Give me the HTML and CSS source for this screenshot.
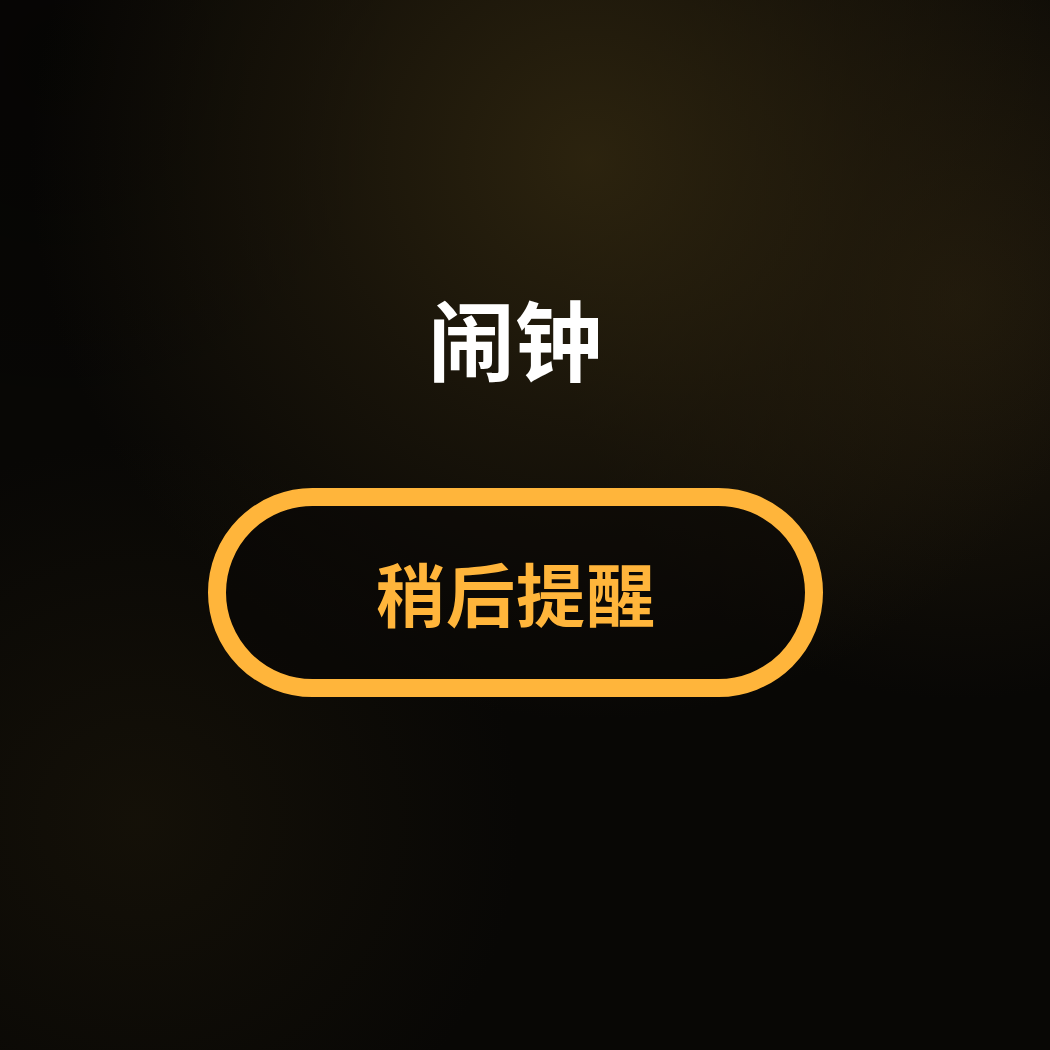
FILE: index.html
```html
<!DOCTYPE html>
<html lang="zh-CN">
<head>
    <meta charset="UTF-8">
    <meta name="viewport" content="width=device-width, initial-scale=1.0">
    <title>闹钟</title>
    <link rel="stylesheet" href="styles.css">
</head>
<body>
    <div class="alarm">
        <h1 class="alarm-title">闹钟</h1>
        <button class="snooze-btn">稍后提醒</button>
    </div>
</body>
</html>
```

FILE: styles.css
```css
html, body {
    margin: 0;
    height: 100%;
}

body {
    background-color: #080705;
    background-image:
        radial-gradient(circle at 590px 160px, rgba(50, 40, 16, 0.85) 0px, rgba(38, 30, 13, 0.55) 280px, rgba(20, 16, 8, 0) 560px),
        radial-gradient(circle at 960px 300px, rgba(44, 34, 15, 0.65) 0px, rgba(30, 22, 10, 0) 400px),
        radial-gradient(circle at 140px 820px, rgba(30, 24, 10, 0.55) 0px, rgba(20, 16, 8, 0) 380px),
        radial-gradient(circle at 60px 60px, rgba(0, 0, 0, 0.35) 0px, rgba(0, 0, 0, 0) 400px);
    font-family: "Noto Sans CJK SC", "Noto Sans", sans-serif;
}

.alarm {
    display: flex;
    flex-direction: column;
    align-items: center;
    padding-top: 294px;
    margin-right: 20px;
}

.alarm-title {
    margin: 0;
    color: #ffffff;
    font-size: 87px;
    font-weight: 700;
    line-height: 1;
    letter-spacing: 0;
}

.snooze-btn {
    margin-top: 107px;
    box-sizing: border-box;
    width: 615px;
    height: 209px;
    border: 18px solid #ffb53b;
    border-radius: 105px;
    background: rgba(10, 8, 5, 0.55);
    color: #ffb53b;
    font-family: "Noto Sans CJK SC", "Noto Sans", sans-serif;
    font-size: 69px;
    font-weight: 700;
    line-height: 1;
    letter-spacing: 1px;
    padding: 0 0 0 2px;
    cursor: pointer;
}
```
